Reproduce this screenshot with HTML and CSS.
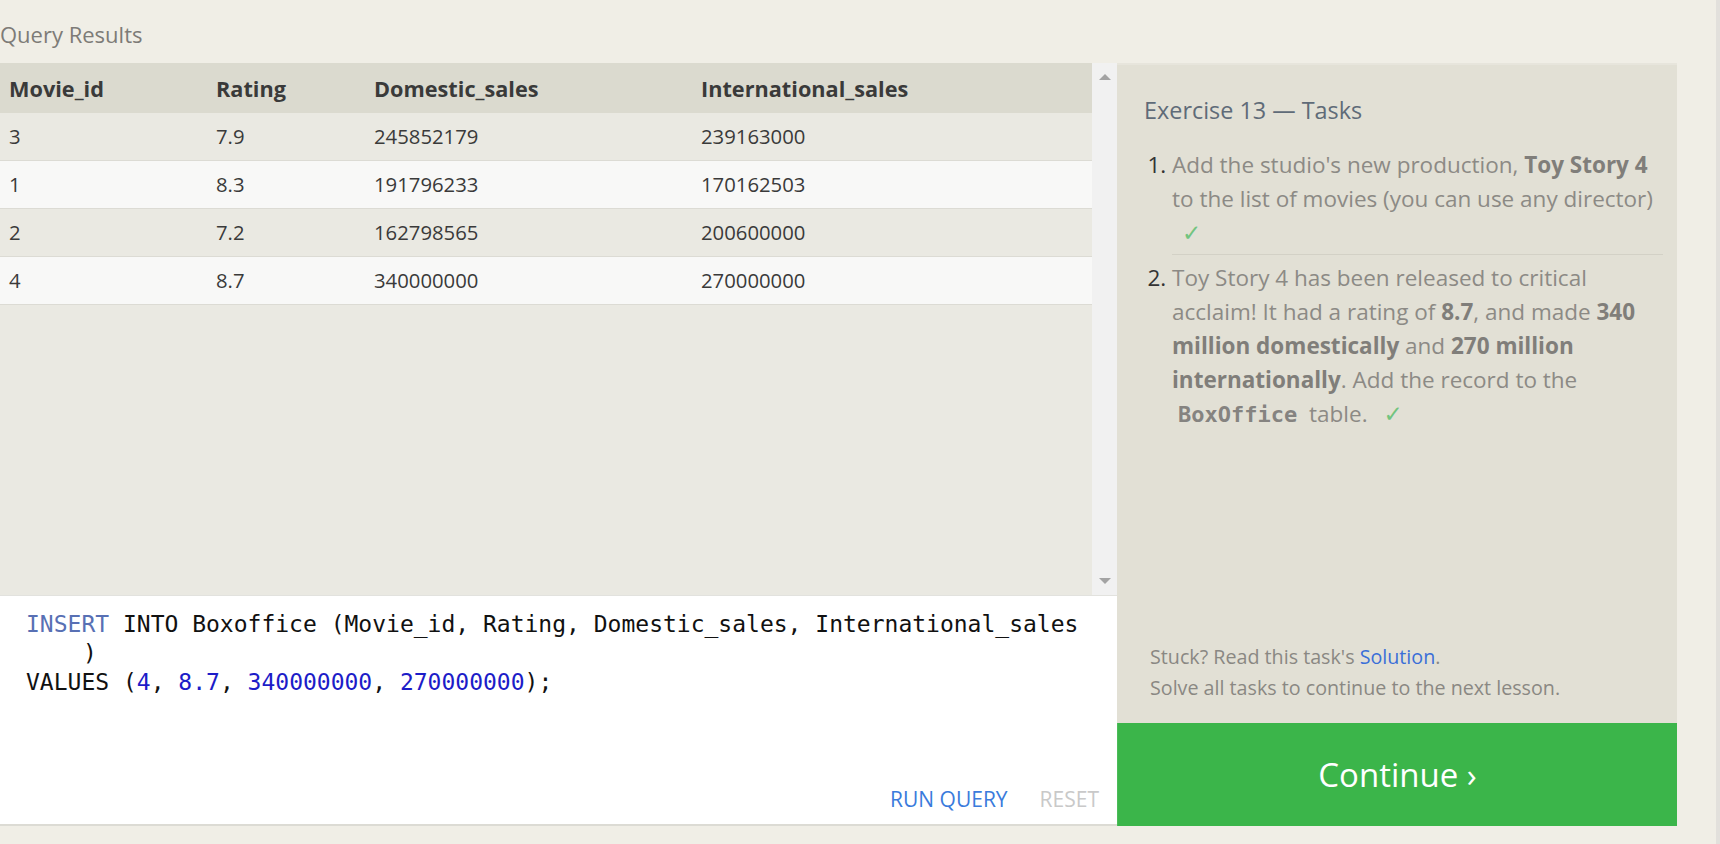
FILE: index.html
```html
<!DOCTYPE html>
<html lang="en">
<head>
<meta charset="utf-8">
<title>Query Results</title>
<link rel="stylesheet" href="styles.css">
</head>
<body>
<div class="page">
  <div class="main">
    <h2 class="results-title">Query Results</h2>
    <div class="workspace">
      <div class="left">
        <div class="results">
          <div class="table-wrap">
            <table class="grid">
              <thead>
                <tr><th class="c1">Movie_id</th><th class="c2">Rating</th><th class="c3">Domestic_sales</th><th>International_sales</th></tr>
              </thead>
              <tbody>
                <tr><td>3</td><td>7.9</td><td>245852179</td><td>239163000</td></tr>
                <tr><td>1</td><td>8.3</td><td>191796233</td><td>170162503</td></tr>
                <tr><td>2</td><td>7.2</td><td>162798565</td><td>200600000</td></tr>
                <tr><td>4</td><td>8.7</td><td>340000000</td><td>270000000</td></tr>
              </tbody>
            </table>
          </div>
          <div class="scrollbar">
            <span class="arrow up"></span>
            <span class="arrow down"></span>
          </div>
        </div>
        <div class="editor">
          <div class="code">
            <div class="line"><span class="kw">INSERT</span> INTO Boxoffice (Movie_id, Rating, Domestic_sales, International_sales</div>
            <div class="line wrap">)</div>
            <div class="line">VALUES (<span class="num">4</span>, <span class="num">8.7</span>, <span class="num">340000000</span>, <span class="num">270000000</span>);</div>
          </div>
          <div class="actions">
            <span class="run">RUN QUERY</span>
            <span class="reset">RESET</span>
          </div>
        </div>
      </div>
      <div class="panel">
        <div class="tasks">
          <h3 class="tasks-title">Exercise 13 — Tasks</h3>
          <ol class="task-list">
            <li>Add the studio's new production, <b>Toy Story 4</b> to the list of movies (you can use any director) <span class="check">✓</span></li>
            <li>Toy Story 4 has been released to critical acclaim! It had a rating of <b>8.7</b>, and made <b>340 million domestically</b> and <b>270 million internationally</b>. Add the record to the <code>BoxOffice</code> table. <span class="check">✓</span></li>
          </ol>
          <div class="help">
            <p>Stuck? Read this task's <a href="#" class="link">Solution</a>.</p>
            <p>Solve all tasks to continue to the next lesson.</p>
          </div>
        </div>
        <div class="continue">Continue ›</div>
      </div>
    </div>
  </div>
  <div class="edge"></div>
</div>
</body>
</html>
```

FILE: styles.css
```css
* { box-sizing: border-box; }
html, body { margin: 0; padding: 0; }
body {
  background: #f0eee6;
  font-family: "Open Sans", "Noto Sans", sans-serif;
  color: #333;
  width: 1720px;
  height: 844px;
  overflow: hidden;
}
.page { display: flex; height: 844px; }
.main { width: 1716px; }
.edge { width: 4px; background: #e2e0dc; }

.results-title {
  margin: 0;
  padding-top: 19px;
  height: 63px;
  font-size: 22px;
  line-height: 30px;
  font-weight: 400;
  color: #7d7b77;
}

.workspace { display: flex; width: 1677px; }
.left { width: 1117px; display: flex; flex-direction: column; }

.results { display: flex; height: 532px; }
.table-wrap { flex: 1; background: #eae9e2; }
.grid { width: 100%; border-collapse: collapse; font-size: 20.3px; }
.grid th {
  background: #dbdacf;
  text-align: left;
  font-weight: 700;
  font-size: 21.7px;
  line-height: 30px;
  padding: 11px 9px 9px 9px;
  color: #3a3a3a;
}
.grid .c1 { width: 207px; }
.grid .c2 { width: 158px; }
.grid .c3 { width: 327px; }
.grid td {
  padding: 10px 9px;
  line-height: 27px;
  color: #3a3a3a;
  border-bottom: 1px solid #dcdbd4;
}
.grid tbody tr:nth-child(odd) td { background: #eae9e2; }
.grid tbody tr:nth-child(even) td { background: #f8f8f7; }

.scrollbar {
  width: 25px;
  background: #f1f1f1;
  display: flex;
  flex-direction: column;
  justify-content: space-between;
  align-items: center;
  padding: 11px 0 11px 0;
}
.arrow { width: 0; height: 0; border-left: 6px solid transparent; border-right: 6px solid transparent; }
.arrow.up { border-bottom: 6px solid #a3a3a3; }
.arrow.down { border-top: 6px solid #a3a3a3; }

.editor {
  height: 231px;
  background: #fff;
  border-top: 1px solid #e2e2de;
  border-bottom: 2px solid #dcdbd4;
  display: flex;
  flex-direction: column;
  justify-content: space-between;
  padding: 14px 18px 11px 26px;
}
.code {
  font-family: "DejaVu Sans Mono", "Liberation Mono", monospace;
  font-size: 23px;
  line-height: 29px;
  color: #111;
}
.line { white-space: pre; }
.line.wrap { padding-left: 57px; }
.kw { color: #5870b4; }
.num { color: #1c1cc8; }
.actions {
  display: flex;
  justify-content: flex-end;
  gap: 32px;
  font-size: 21px;
  line-height: 28px;
}
.run { color: #3a7bdc; }
.reset { color: #c9c9c9; }

.panel {
  width: 560px;
  display: flex;
  flex-direction: column;
  border-top: 2px solid #e7e5dc;
}
.tasks {
  flex: 1;
  background: #e2e0d5;
  padding: 30px 14px 20px 27px;
  display: flex;
  flex-direction: column;
}
.tasks-title {
  margin: 0;
  font-size: 23.4px;
  font-weight: 400;
  line-height: 30px;
  color: #5f6b78;
}
.task-list {
  margin: 23px 0 0 0;
  padding-left: 28px;
  font-size: 22.5px;
  line-height: 34px;
  color: #8c8a85;
}
.task-list li { padding: 0 0 4px 0; }
.task-list li + li { border-top: 1px solid #d3d1c6; padding-top: 6px; }
.task-list li::marker { color: #333; }
.task-list b { color: #807e7a; font-weight: 700; }
.task-list code {
  font-family: "DejaVu Sans Mono", "Liberation Mono", monospace;
  font-weight: 700;
  font-size: 22px;
  color: #858380;
  padding: 0 6px;
}
.check { color: #72c47f; margin-left: 10px; font-family: "DejaVu Sans", sans-serif; font-size: 23px; }

.help { margin-top: auto; font-size: 19.7px; line-height: 31px; color: #8a8883; padding-left: 6px; }
.help p { margin: 0; }
.link { color: #3a6fd8; text-decoration: none; }

.continue {
  height: 103px;
  background: #3bb54a;
  color: #fff;
  font-size: 33px;
  display: flex;
  align-items: center;
  justify-content: center;
  border-left: 1px solid #4cbc59;
}
```
